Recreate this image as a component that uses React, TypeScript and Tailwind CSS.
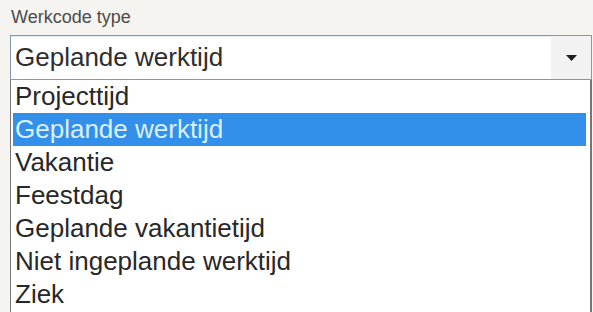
import React from 'react';

const options = [
  'Projecttijd',
  'Geplande werktijd',
  'Vakantie',
  'Feestdag',
  'Geplande vakantietijd',
  'Niet ingeplande werktijd',
  'Ziek',
];

export default function App() {
  const selected = 'Geplande werktijd';

  return (
    <div
      className="w-[593px] h-[312px] overflow-hidden bg-[#f5f4f1] pl-[10px] pr-[1px]"
      style={{ fontFamily: '"Liberation Sans", Arial, sans-serif' }}
    >
      {/* Label */}
      <div className="h-[35px] pt-[6px] pl-[1px] text-[18px] leading-[22px] text-[#4b4b4b]">Werkcode type</div>

      {/* Combobox */}
      <div className="flex h-[45px] border border-[#8497ae] bg-white shadow-[inset_0_1px_0_#e3ecf6]">
        <div className="flex-1 pl-[4px] pt-[6px] text-[26px] leading-[30px] text-[#2e2e2e]">{selected}</div>
        <div className="flex w-[40px] items-center justify-center bg-[#f2f2f2]">
          <svg width="11" height="6" viewBox="0 0 11 6">
            <path d="M0 0h11L5.5 6z" fill="#1e1e1e" />
          </svg>
        </div>
      </div>

      {/* Open list */}
      <div className="h-[233px] border-l border-r-2 border-[#777777] bg-white pr-[4px]">
        {options.map((o) => (
          <div
            key={o}
            className={
              o === selected
                ? 'ml-[2px] h-[33px] bg-[#3390ea] pl-[2px] text-[26px] leading-[32px] text-[#dcefff]'
                : 'h-[33px] pl-[4px] text-[26px] leading-[32px] text-[#282828]'
            }
          >
            {o}
          </div>
        ))}
      </div>
    </div>
  );
}
